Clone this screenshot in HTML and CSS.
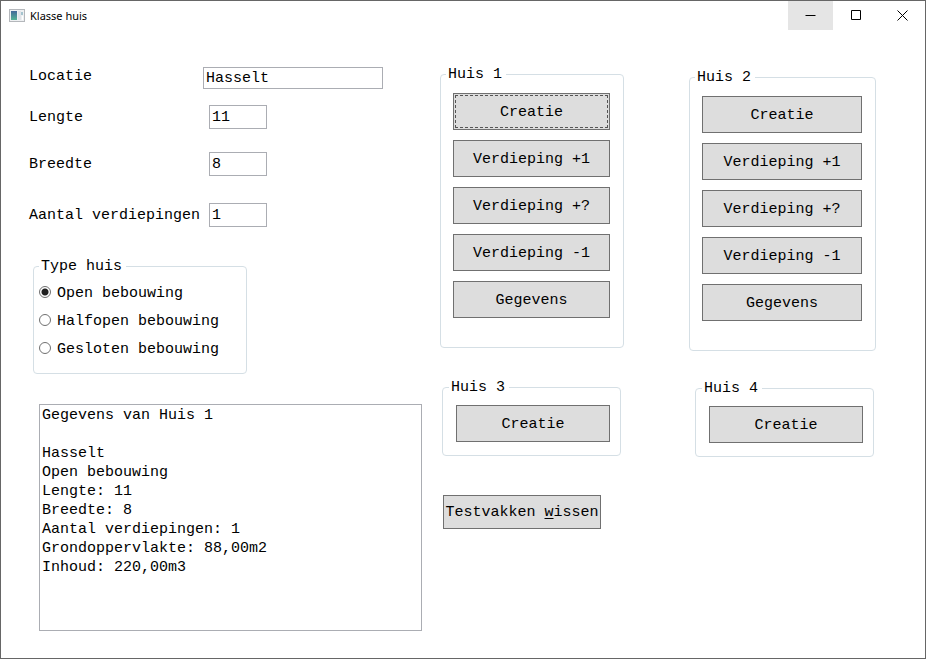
FILE: index.html
```html
<!DOCTYPE html>
<html lang="nl">
<head>
<meta charset="utf-8">
<title>Klasse huis</title>
<link rel="stylesheet" href="styles.css">
</head>
<body>
<div class="window">
  <header class="titlebar">
    <svg class="app-icon" width="16" height="14" viewBox="0 0 16 14" aria-hidden="true">
      <defs>
        <linearGradient id="pane" x1="0" y1="0" x2="0" y2="1">
          <stop offset="0" stop-color="#43689a"/>
          <stop offset="1" stop-color="#55b394"/>
        </linearGradient>
      </defs>
      <rect x="0.5" y="0.5" width="15" height="12" fill="#eef0f2" stroke="#b4b7bb"/>
      <rect x="2" y="2" width="6" height="9" fill="url(#pane)"/>
      <rect x="9" y="2" width="3" height="9" fill="#e1e4e9"/>
      <rect x="12" y="3" width="2" height="3" fill="#a5c4cf"/>
      <rect x="13" y="7" width="1" height="4" fill="#fff"/>
    </svg>
    <h1 class="title">Klasse huis</h1>
    <button class="caption active" type="button" aria-label="Minimaliseren">
      <svg width="11" height="11" viewBox="0 0 11 11"><path d="M0.5 5.5h10"/></svg>
    </button>
    <button class="caption" type="button" aria-label="Maximaliseren">
      <svg width="11" height="11" viewBox="0 0 11 11"><path d="M0.5 0.5h9v9h-9z"/></svg>
    </button>
    <button class="caption" type="button" aria-label="Sluiten">
      <svg width="11" height="11" viewBox="0 0 11 11"><path d="M0.5 0.5l10 10M10.5 0.5l-10 10"/></svg>
    </button>
  </header>

  <main class="content">
    <div class="column details">
      <div class="fields">
        <label for="locatie">Locatie</label>
        <input id="locatie" type="text" value="Hasselt">
        <label for="lengte">Lengte</label>
        <input id="lengte" class="number" type="text" value="11">
        <label for="breedte">Breedte</label>
        <input id="breedte" class="number" type="text" value="8">
        <label for="aantal">Aantal verdiepingen</label>
        <input id="aantal" class="number" type="text" value="1">
      </div>

      <fieldset class="group types">
        <legend>Type huis</legend>
        <label><input type="radio" name="type" checked>Open bebouwing</label>
        <label><input type="radio" name="type">Halfopen bebouwing</label>
        <label><input type="radio" name="type">Gesloten bebouwing</label>
      </fieldset>

      <textarea class="output" aria-label="Gegevens">Gegevens van Huis 1

Hasselt
Open bebouwing
Lengte: 11
Breedte: 8
Aantal verdiepingen: 1
Grondoppervlakte: 88,00m2
Inhoud: 220,00m3</textarea>
    </div>

    <div class="column first">
      <fieldset class="group house">
        <legend>Huis 1</legend>
        <button class="action focused" type="button">Creatie</button>
        <button class="action" type="button">Verdieping +1</button>
        <button class="action" type="button">Verdieping +?</button>
        <button class="action" type="button">Verdieping -1</button>
        <button class="action" type="button">Gegevens</button>
      </fieldset>
      <fieldset class="group house small">
        <legend>Huis 3</legend>
        <button class="action" type="button">Creatie</button>
      </fieldset>
      <button class="action clear" type="button" accesskey="w"><span>Testvakken <u>w</u>issen</span></button>
    </div>

    <div class="column second">
      <fieldset class="group house">
        <legend>Huis 2</legend>
        <button class="action" type="button">Creatie</button>
        <button class="action" type="button">Verdieping +1</button>
        <button class="action" type="button">Verdieping +?</button>
        <button class="action" type="button">Verdieping -1</button>
        <button class="action" type="button">Gegevens</button>
      </fieldset>
      <fieldset class="group house small">
        <legend>Huis 4</legend>
        <button class="action" type="button">Creatie</button>
      </fieldset>
    </div>
  </main>
</div>
</body>
</html>
```
FILE: styles.css
```css
* {
  box-sizing: border-box;
}

body {
  margin: 0;
  background: #fff;
  color: #000;
  font: 15px/18px "Liberation Mono", monospace;
}

button,
input,
textarea {
  margin: 0;
  border-radius: 0;
  color: inherit;
  font: inherit;
}

.window {
  display: flex;
  flex-direction: column;
  min-height: 100vh;
  border: 1px solid #666;
}

/* Title bar */
.titlebar {
  display: flex;
  align-items: center;
  height: 29px;
  padding-left: 8px;
}

.title {
  flex: 1;
  margin: 0 0 0 5px;
  font: 11px/16px "Noto Sans", sans-serif;
}

.caption {
  display: flex;
  align-items: center;
  justify-content: center;
  width: 46px;
  height: 29px;
  padding: 0;
  border: 0;
  background: transparent;
}

.caption.active {
  width: 45px;
  background: #e5e5e5;
}

.caption svg {
  fill: none;
  stroke: #000;
}

/* Columns */
.content {
  display: grid;
  grid-template-columns: 411fr 249fr 187fr;
  align-items: start;
  padding: 0 49px 27px 28px;
}

.column {
  display: flex;
  flex-direction: column;
  min-width: 0;
}

.details {
  padding: 37px 18px 0 0;
}

.first {
  gap: 29px;
  padding: 34px 65px 0 0;
}

.second {
  gap: 27px;
  padding-top: 37px;
}

/* Text fields */
.fields {
  display: grid;
  grid-template-columns: 174px 1fr;
  grid-template-rows: 38px 47px 51px 24px;
  align-items: start;
}

.fields label {
  line-height: 26px;
}

.fields label:first-child {
  line-height: 20px;
}

.fields input {
  width: 180px;
  height: 22px;
  padding: 0 2px;
  border: 1px solid #abadb3;
  background: #fff;
}

.fields .number {
  width: 58px;
  height: 24px;
  margin-left: 6px;
}

/* Group boxes */
.group {
  min-width: 0;
  margin: 0;
  border: 1px solid #d5dfe5;
  border-radius: 4px;
}

.group legend {
  margin-left: -7px;
  padding: 2px 4px 0 2px;
}

.types {
  width: 214px;
  margin: 29px 0 30px 4px;
  padding: 3px 5px 10px;
}

.types legend {
  margin-left: 0;
}

.types label {
  display: flex;
  align-items: flex-start;
  gap: 6px;
  height: 28px;
  padding-top: 5px;
  line-height: 20px;
  white-space: nowrap;
}

.types input {
  appearance: none;
  width: 12px;
  height: 12px;
  margin-top: 2px;
  border: 1px solid #707070;
  border-radius: 50%;
  background: #fff;
}

.types input:checked {
  background: radial-gradient(circle, #212121 3px, #fff 4px);
}

.house {
  display: flex;
  flex-direction: column;
  gap: 10px;
  padding: 9px 13px 29px 12px;
}

.small {
  width: 179px;
  padding: 8px 10px 13px 13px;
}

.first .small {
  margin-left: 2px;
}

.second .small {
  margin-left: 6px;
}

/* Buttons */
.action {
  height: 37px;
  padding: 2px 0 0;
  border: 1px solid #707070;
  background: #ddd;
  white-space: nowrap;
}

.action.focused {
  outline: 1px dashed #555;
  outline-offset: -3px;
}

.clear {
  width: 158px;
  height: 34px;
  margin: 10px 0 0 3px;
}

.clear u {
  text-underline-offset: 2px;
}

/* Output box */
.output {
  height: 227px;
  margin-left: 10px;
  padding: 1px 2px;
  border: 1px solid #abadb3;
  background: #fff;
  line-height: 19px;
  resize: none;
}
```
